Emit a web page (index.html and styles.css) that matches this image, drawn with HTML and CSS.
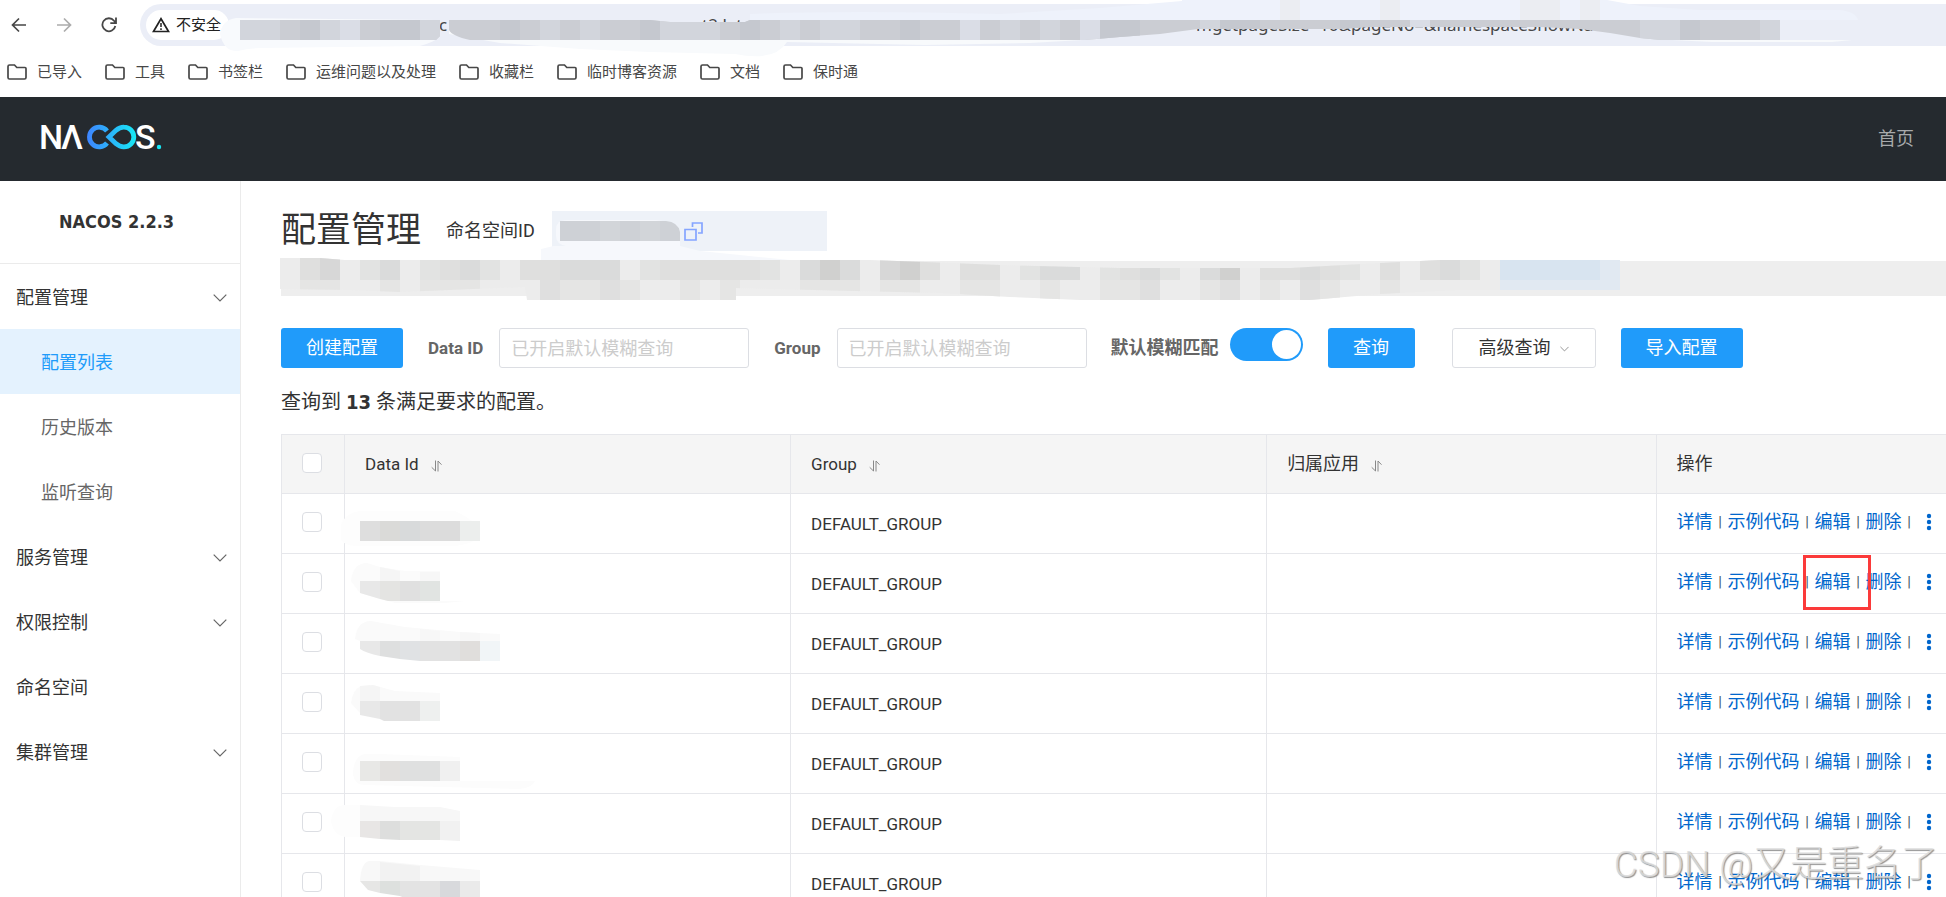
FILE: index.html
```html
<!DOCTYPE html>
<html lang="zh-CN">
<head>
<meta charset="utf-8">
<title>NACOS - 配置管理</title>
<link rel="stylesheet" href="styles.css">
</head>
<body>
<svg class="defs" aria-hidden="true">
  <symbol id="folder" viewBox="0 0 20 16"><path d="M2.5 1h5l2.3 2.5h8.2a1 1 0 0 1 1 1V13.500a1.500 1.500 0 0 1-1.500 1.500h-15A1.500 1.500 0 0 1 1 13.500v-11A1.500 1.500 0 0 1 2.500 1z" fill="none" stroke="#474747" stroke-width="1.700"/></symbol>
  <symbol id="chevron" viewBox="0 0 14 8"><path d="M.7.7 7 7 13.300.7" fill="none" stroke="currentColor" stroke-width="1.200"/></symbol>
  <symbol id="sort" viewBox="0 0 11 12"><path d="M4.500.5v10.500L.7 7.300M7 11.500V1l3.500 3.700" fill="none" stroke="#888" stroke-width="1"/></symbol>
  <symbol id="dots" viewBox="0 0 6 18"><circle cx="3" cy="3" r="2.200"/><circle cx="3" cy="9" r="2.200"/><circle cx="3" cy="15" r="2.200"/></symbol>
</svg>
<div class="window">
  <div class="browser">
    <div class="toolbar">
      <button class="tool" aria-label="后退"><svg width="16" height="16" viewBox="0 0 16 16"><path d="M15 8H2M8 1.500 1.500 8 8 14.500" fill="none" stroke="#474747" stroke-width="1.700"/></svg></button>
      <button class="tool faded" aria-label="前进"><svg width="16" height="16" viewBox="0 0 16 16"><path d="M1 8h13M8 1.500 14.500 8 8 14.500" fill="none" stroke="#474747" stroke-width="1.700"/></svg></button>
      <button class="tool" aria-label="重新加载"><svg width="16" height="16" viewBox="0 0 16 16"><path d="M14.300 9A6.500 6.500 0 1 1 13 3.700L14.500 5.500M15 .5v5.700H9.300" fill="none" stroke="#474747" stroke-width="1.800"/></svg></button>
      <div class="address">
        <button class="chip"><svg width="18" height="16" viewBox="0 0 18 16"><path d="M9 1.700 16.500 14.500h-15z" fill="none" stroke="#222" stroke-width="1.700"/><path d="M9 6v4M9 11.300v1.700" stroke="#222" stroke-width="1.500"/></svg>不安全</button>
        <div class="url"><span class="part-a">c</span><span class="part-b">t2.lat</span><span class="part-c">mgetpageSize=10&amp;pageNo=&amp;namespaceShowNa</span></div>
      </div>
      <svg class="cover" width="1946" height="60" viewBox="0 0 1946 60" aria-hidden="true">
        <path d="M236 18Q222 20 220 34Q224 52 238 51Q248 48 262 48L420 46Q434 42 438 38L438 20z" fill="#f8fafd"/>
        <path d="M449 20V34L500 43L580 49L650 52L735 54Q775 62 787 42L925 45L1030 43L1100 39V22H670L650 20z" fill="#f8fafc"/>
        <path d="M750 20V14Q850 10 1000 14L1100 8L1182 1V0H1607L1640 6L1700 10L1840 10Q1856 12 1858 20z" fill="#eef2fb"/>
        <path d="M1280 0h20v20h-20zM1380 0h20v20h-20zM1520 0h40v20h-40zM1580 0h20v20h-20z" fill="#ebedf2"/>
        <path d="M1672 40h180l-20 2h-120z" fill="#f8fafc"/>
        <clipPath id="urlclip"><path d="M240 20H440L440 36L436 40H240zM449 20H650L670 22H745L750 20H1780V40H1661L1640 38L1610 33L1580 29L1540 27H1410L1370 27L1340 29H1198L1160 34L1120 37L1085 40H470Q452 36 449 30z"/></clipPath>
        <g clip-path="url(#urlclip)">
          <path d="M240 20H1780V40H240z" fill="#cbcdd3"/>
          <path d="M240 20h40v20h-40zM320 20h20v20h-20zM420 20h20v20h-20zM540 20h20v20h-20zM580 20h20v20h-20zM660 20h60v20h-60zM780 20h20v20h-20zM820 20h40v20h-40zM1000 20h20v20h-20zM1040 20h20v20h-20zM1200 20h20v20h-20zM1640 20h40v20h-40zM1760 20h20v20h-20z" fill="#d2d5dc"/>
          <path d="M340 20h20v20h-20zM960 20h20v20h-20zM1080 20h20v20h-20zM1410 20h20v20h-20z" fill="#dadde6"/>
          <path d="M300 20h20v20h-20zM380 20h40v20h-40zM500 20h20v20h-20zM640 20h20v20h-20zM740 20h20v20h-20zM900 20h20v20h-20zM1100 20h40v20h-40zM1220 20h40v20h-40zM1340 20h20v20h-20zM1680 20h20v20h-20z" fill="#c5c8cf"/>
        </g>
      </svg>
    </div>
    <nav class="bookmarks" aria-label="书签">
      <a href="#"><svg><use href="#folder"/></svg>已导入</a>
      <a href="#"><svg><use href="#folder"/></svg>工具</a>
      <a href="#"><svg><use href="#folder"/></svg>书签栏</a>
      <a href="#"><svg><use href="#folder"/></svg>运维问题以及处理</a>
      <a href="#"><svg><use href="#folder"/></svg>收藏栏</a>
      <a href="#"><svg><use href="#folder"/></svg>临时博客资源</a>
      <a href="#"><svg><use href="#folder"/></svg>文档</a>
      <a href="#"><svg><use href="#folder"/></svg>保时通</a>
    </nav>
  </div>

  <header class="topbar">
    <a class="logo" href="#" aria-label="NACOS">
      <svg width="122" height="26" viewBox="0 0 122 26">
        <defs><linearGradient id="loop" gradientUnits="userSpaceOnUse" x1="45" y1="0" x2="96" y2="0"><stop offset="0" stop-color="#4080ff"/><stop offset="1" stop-color="#16e8f5"/></linearGradient></defs>
        <text class="logo-text" y="25"><tspan x="-1">N</tspan><tspan x="21">Λ</tspan><tspan x="95">S</tspan></text>
        <path d="M67 19A9.800 9.800 0 1 1 67 7" fill="none" stroke="url(#loop)" stroke-width="4.800"/>
        <path d="M69 13L76 6.300Q80 3 84 3.200A9.800 9.800 0 0 1 84 22.800Q80 23 76 19.700z" fill="none" stroke="url(#loop)" stroke-width="4.800"/>
        <circle cx="119" cy="23" r="2.200" fill="#16e8f5"/>
      </svg>
    </a>
    <a class="home" href="#">首页</a>
  </header>

  <div class="layout">
    <aside class="sidebar">
      <div class="version">NACOS 2.2.3</div>
      <nav class="menu">
        <a href="#">配置管理<svg><use href="#chevron"/></svg></a>
        <a class="sub active" href="#">配置列表</a>
        <a class="sub" href="#">历史版本</a>
        <a class="sub" href="#">监听查询</a>
        <a href="#">服务管理<svg><use href="#chevron"/></svg></a>
        <a href="#">权限控制<svg><use href="#chevron"/></svg></a>
        <a href="#">命名空间</a>
        <a href="#">集群管理<svg><use href="#chevron"/></svg></a>
      </nav>
    </aside>

    <main class="main">
      <div class="heading">
        <h1>配置管理</h1>
        <span class="ns-label">命名空间ID</span>
        <div class="ns-box">
          <svg width="124" height="30" viewBox="0 0 124 30" aria-hidden="true"><path d="M0 14Q0 4 10 4H100Q122 6 124 18V30H10Q0 28 0 20z" fill="#f6f8fc"/><path d="M4 5H110Q122 6 124 16V25H4z" fill="#ced1d6"/><path d="M44 5h20v20h-20zM84 5h20v20h-20z" fill="#d2d5d9"/></svg>
          <button class="copy" aria-label="复制"><svg width="19" height="19" viewBox="0 0 19 19"><path d="M8.500 5V1h9.500v10h-4M1 7.500h11v10.500H1z" fill="none" stroke="#85a5ff" stroke-width="1.700"/></svg></button>
        </div>
      </div>

      <div class="banner">
        <svg width="1400" height="60" viewBox="270 246 1400 60" aria-hidden="true">
          <path d="M541 249L562 244H672L700 251L790 260H541z" fill="#f6f8fc"/>
          <clipPath id="bannerclip"><path d="M280 258H320L345 260H870L925 262L1000 265L1120 268H1290L1380 263L1440 260H1620V290H1460L1380 294L1310 300H1080L1010 297L940 293L736 288V300H527L525 287L400 292L350 290L280 289z"/></clipPath>
          <g clip-path="url(#bannerclip)">
            <path d="M280 256H1620V300H280z" fill="#ececec"/>
            <path d="M360 260h20v20h-20zM420 260h20v20h-20zM640 260h20v20h-20zM760 260h20v20h-20zM1020 260h20v20h-20zM1100 260h20v20h-20zM1160 260h20v20h-20zM1340 260h20v20h-20zM1460 260h20v20h-20zM480 260h20v20h-20z" fill="#e2e3e2"/>
            <path d="M300 258h20v22h-20zM440 260h20v20h-20zM520 260h40v20h-40zM660 260h100v20h-100zM920 260h20v20h-20zM960 260h40v20h-40zM1120 260h20v20h-20zM1260 260h40v20h-40zM1320 260h20v20h-20zM1380 260h20v20h-20zM1420 260h20v20h-20z" fill="#dfdfde"/>
            <path d="M380 260h20v20h-20zM460 260h20v20h-20zM560 260h60v20h-60zM800 260h20v20h-20zM840 260h20v20h-20zM1040 260h40v20h-40zM1140 260h20v20h-20zM1200 260h20v20h-20zM1300 260h20v20h-20zM1440 260h20v20h-20z" fill="#dadbdb"/>
            <path d="M320 258h20v22h-20zM880 260h20v20h-20z" fill="#d7d7d7"/>
            <path d="M820 260h20v20h-20zM900 260h20v20h-20zM1220 260h20v20h-20z" fill="#d0d0cf"/>
            <path d="M300 280h40v20h-40zM380 280h20v20h-20zM420 280h60v20h-60zM560 280h40v20h-40zM620 280h20v20h-20zM680 280h20v20h-20zM720 280h20v20h-20zM800 280h60v20h-60zM880 280h40v20h-40zM960 280h40v20h-40zM1040 280h20v20h-20zM1100 280h40v20h-40zM1200 280h20v20h-20zM1260 280h20v20h-20zM1320 280h20v20h-20zM1380 280h20v20h-20z" fill="#e5e5e4"/>
            <path d="M540 280h20v20h-20zM600 280h20v20h-20zM1140 280h20v20h-20zM1220 280h20v20h-20zM1300 280h20v20h-20z" fill="#dfdfdf"/>
            <path d="M1500 260h120v20h-120z" fill="#d8e4f0"/><path d="M1500 280h120v10h-120zM1600 260h20v20h-20z" fill="#e1e9f2"/>
          </g>
        </svg>
      </div>

      <form class="filters" onsubmit="return false">
        <button class="btn primary" type="button">创建配置</button>
        <label class="field id-field"><span>Data ID</span><input type="text" placeholder="已开启默认模糊查询"></label>
        <label class="field group-field"><span>Group</span><input type="text" placeholder="已开启默认模糊查询"></label>
        <label class="field fuzzy"><span>默认模糊匹配</span><input class="switch" type="checkbox" role="switch" checked></label>
        <button class="btn primary search" type="submit">查询</button>
        <button class="btn more" type="button">高级查询<svg><use href="#chevron"/></svg></button>
        <button class="btn primary" type="button">导入配置</button>
      </form>

      <p class="summary">查询到 <strong>13</strong> 条满足要求的配置。</p>

      <table class="grid">
        <colgroup><col class="c-check"><col class="c-id"><col class="c-group"><col class="c-app"><col></colgroup>
        <thead>
          <tr>
            <th class="check"><input type="checkbox" aria-label="全选"></th>
            <th>Data Id<svg><use href="#sort"/></svg></th>
            <th>Group<svg><use href="#sort"/></svg></th>
            <th class="cjk">归属应用<svg><use href="#sort"/></svg></th>
            <th class="cjk">操作</th>
          </tr>
        </thead>
        <tbody>
          <tr>
            <td class="check"><input type="checkbox" aria-label="选择第1行"></td>
            <td class="masked"><svg viewBox="0 0 420 58" aria-hidden="true"><path d="M-4 30Q0 18 15 16H110Q140 30 132 44Q120 52 100 51H10Q-2 50 -4 44z" fill="#fdfdfd"/><path d="M15 26h20v20h-20z" fill="#dedede"/><path d="M35 26h20v20h-20z" fill="#dadad8"/><path d="M55 26h20v20h-20z" fill="#d8dadb"/><path d="M75 26h40v20h-40z" fill="#dcdcdc"/><path d="M115 26h20v20h-20z" fill="#eceeed"/></svg></td>
            <td>DEFAULT_GROUP</td><td></td>
            <td class="actions"><div><a href="#">详情</a><i>|</i><a href="#">示例代码</a><i>|</i><a href="#">编辑</a><i>|</i><a href="#">删除</a><i>|</i><button aria-label="更多"><svg><use href="#dots"/></svg></button></div></td>
          </tr>
          <tr>
            <td class="check"><input type="checkbox" aria-label="选择第2行"></td>
            <td class="masked"><svg viewBox="0 0 420 58" aria-hidden="true"><path d="M6 26Q8 8 22 8L35 12L60 16H95V26L80 46H120L100 48H50L15 38z" fill="#fbfbfb"/><path d="M35 12L55 16V26H35z" fill="#f5f5f5"/><path d="M75 17h20v9h-20z" fill="#f7f7f7"/><path d="M15 26h20v18l-20-6z" fill="#e8e8e8"/><path d="M35 26h20v20h-12l-8-2z" fill="#e4e4e2"/><path d="M55 26h20v20h-20z" fill="#e0e0e0"/><path d="M75 26h20v20h-20z" fill="#e1e4e2"/></svg></td>
            <td>DEFAULT_GROUP</td><td></td>
            <td class="actions"><div><a href="#">详情</a><i>|</i><a href="#">示例代码</a><i>|</i><a class="marked" href="#">编辑</a><i>|</i><a href="#">删除</a><i>|</i><button aria-label="更多"><svg><use href="#dots"/></svg></button></div></td>
          </tr>
          <tr>
            <td class="check"><input type="checkbox" aria-label="选择第3行"></td>
            <td class="masked"><svg viewBox="0 0 420 58" aria-hidden="true"><path d="M10 24Q12 6 26 6L60 12L115 17L155 19V26H15z" fill="#fafafa"/><path d="M75 14l20 2v10h-20zM115 17l20 1v8h-20z" fill="#f7f7f7"/><path d="M15 26h20v15q-14-3-20-7z" fill="#e8e8e8"/><path d="M35 26h20v18l-20-3z" fill="#dedfdf"/><path d="M55 26h20v20l-20-2z" fill="#e0e2e4"/><path d="M75 26h40v20h-40z" fill="#e2e2e2"/><path d="M115 26h20v20h-20z" fill="#e0dedc"/><path d="M135 26h20v20h-20z" fill="#f1f5f7"/></svg></td>
            <td>DEFAULT_GROUP</td><td></td>
            <td class="actions"><div><a href="#">详情</a><i>|</i><a href="#">示例代码</a><i>|</i><a href="#">编辑</a><i>|</i><a href="#">删除</a><i>|</i><button aria-label="更多"><svg><use href="#dots"/></svg></button></div></td>
          </tr>
          <tr>
            <td class="check"><input type="checkbox" aria-label="选择第4行"></td>
            <td class="masked"><svg viewBox="0 0 420 58" aria-hidden="true"><path d="M6 28Q8 14 16 11L28 10L50 16L95 18V26H15V38z" fill="#fafafa"/><path d="M15 11L28 10L35 12V26H15z" fill="#f5f5f5"/><path d="M15 26h20v18l-20-4z" fill="#e8e8e8"/><path d="M35 26h40v20h-36l-4-2z" fill="#e2e2e2"/><path d="M75 26h20v20h-20z" fill="#eef0ef"/></svg></td>
            <td>DEFAULT_GROUP</td><td></td>
            <td class="actions"><div><a href="#">详情</a><i>|</i><a href="#">示例代码</a><i>|</i><a href="#">编辑</a><i>|</i><a href="#">删除</a><i>|</i><button aria-label="更多"><svg><use href="#dots"/></svg></button></div></td>
          </tr>
          <tr>
            <td class="check"><input type="checkbox" aria-label="选择第5行"></td>
            <td class="masked"><svg viewBox="0 0 420 58" aria-hidden="true"><path d="M8 36Q10 20 20 19H35L115 22V46H190Q186 54 170 54L20 50Q10 50 8 40z" fill="#fcfcfc"/><path d="M15 26h20v20h-20z" fill="#e8e8e6"/><path d="M35 26h20v20h-20z" fill="#e2e0de"/><path d="M55 26h40v20h-40z" fill="#dfe0e0"/><path d="M95 26h20v20h-20z" fill="#f0f0f0"/></svg></td>
            <td>DEFAULT_GROUP</td><td></td>
            <td class="actions"><div><a href="#">详情</a><i>|</i><a href="#">示例代码</a><i>|</i><a href="#">编辑</a><i>|</i><a href="#">删除</a><i>|</i><button aria-label="更多"><svg><use href="#dots"/></svg></button></div></td>
          </tr>
          <tr>
            <td class="check"><input type="checkbox" aria-label="选择第6行"></td>
            <td class="masked"><svg viewBox="0 0 420 58" aria-hidden="true"><path d="M-14 26Q-12 10 0 10H15V42L0 42Q-12 40 -14 26z" fill="#fdfdfd"/><path d="M15 10L50 12H95L115 16V26H15z" fill="#f7f7f7"/><path d="M15 26h20v18l-20-2z" fill="#e8e6e5"/><path d="M35 26h20v19l-20-1z" fill="#dddedd"/><path d="M55 26h40v19h-40z" fill="#e4e5e3"/><path d="M95 26h20v20l-20-1z" fill="#f1f1f1"/></svg></td>
            <td>DEFAULT_GROUP</td><td></td>
            <td class="actions"><div><a href="#">详情</a><i>|</i><a href="#">示例代码</a><i>|</i><a href="#">编辑</a><i>|</i><a href="#">删除</a><i>|</i><button aria-label="更多"><svg><use href="#dots"/></svg></button></div></td>
          </tr>
          <tr>
            <td class="check"><input type="checkbox" aria-label="选择第7行"></td>
            <td class="masked"><svg viewBox="0 0 420 58" aria-hidden="true"><path d="M15 26Q16 8 24 6H35L75 10L135 15V26z" fill="#f8f8f8"/><path d="M35 7l40 4v15h-40z" fill="#f2f2f2"/><path d="M15 26h20v12l-12-3z" fill="#e6e6e5"/><path d="M35 26h20v15l-20-3z" fill="#dde0de"/><path d="M55 26h40v20h-28l-12-5z" fill="#e3e3e3"/><path d="M95 26h20v20h-20z" fill="#d8d9dc"/><path d="M115 26h20v20h-20z" fill="#eaeaea"/></svg></td>
            <td>DEFAULT_GROUP</td><td></td>
            <td class="actions"><div><a href="#">详情</a><i>|</i><a href="#">示例代码</a><i>|</i><a href="#">编辑</a><i>|</i><a href="#">删除</a><i>|</i><button aria-label="更多"><svg><use href="#dots"/></svg></button></div></td>
          </tr>
        </tbody>
      </table>
    </main>
  </div>
  <div class="watermark">CSDN @又是重名了</div>
</div>
</body>
</html>
```
FILE: styles.css
```css
* { box-sizing: border-box; }
body {
  margin: 0;
  color: #333;
  background: #fff;
  font: 18px/24px Roboto, "Noto Sans CJK SC", sans-serif;
}
a { color: inherit; text-decoration: none; }
button { border: 0; padding: 0; background: none; color: inherit; font: inherit; }
.defs { display: none; }
.window { position: relative; display: flex; flex-direction: column; height: 100vh; overflow: hidden; }

.browser { flex: none; font-size: 15px; line-height: 20px; color: #474747; }
.toolbar { position: relative; display: flex; align-items: center; gap: 29px; padding: 4px 0 0 11px; }
.tool { display: flex; }
.tool.faded { opacity: .45; }
.address {
  flex: 1; display: flex; align-items: center; height: 42px; min-width: 0;
  margin-left: -6px; padding-left: 6px; overflow: hidden;
  border-radius: 21px 0 0 21px; background: #ebeef7;
}
.chip {
  flex: none; display: flex; align-items: center; gap: 6px; height: 30px;
  padding: 0 8px 0 6px; border-radius: 15px; background: #fff; color: #222;
}
.url { display: flex; font: 17px/20px "Noto Sans", sans-serif; white-space: nowrap; }
.part-a { width: 263px; margin-left: 210px; }
.part-b { width: 494px; }
.cover { position: absolute; left: 0; top: 0; }
.bookmarks { display: flex; gap: 23px; height: 51px; padding: 0 7px; align-items: center; }
.bookmarks a { display: flex; align-items: center; gap: 10px; }
.bookmarks svg { width: 20px; height: 16px; }

.topbar {
  flex: none; display: flex; align-items: center; justify-content: space-between;
  height: 84px; padding: 0 32px 0 40px; background: #252a2f;
}
.logo { display: flex; margin-bottom: 4px; }
.logo svg { overflow: visible; }
.logo-text { font: 500 34px Roboto, sans-serif; fill: #fff; }
.home { color: #a8aaac; }

.layout { flex: 1; display: flex; min-height: 0; }
.sidebar { flex: none; width: 241px; border-right: 1px solid #ebebeb; }
.version {
  padding: 29px 59px; border-bottom: 1px solid #ebebeb;
  font-family: "DejaVu Sans Condensed", "DejaVu Sans", sans-serif; font-weight: 700; white-space: nowrap;
}
.menu a { display: flex; align-items: center; justify-content: space-between; height: 65px; padding: 3px 13px 0 16px; }
.menu svg { width: 14px; height: 8px; color: #666; }
.menu .sub { padding-left: 41px; color: #666; }
.menu .active { background: #e4f2fe; color: #209bfa; }

.main { flex: 1; min-width: 0; padding: 30px 0 0 40px; }
.heading { display: flex; align-items: center; height: 40px; }
h1 { margin: 0 25px 0 0; font-size: 35px; line-height: 40px; font-weight: 400; }
.ns-label { margin-right: 17px; }
.ns-box { display: flex; align-items: center; width: 275px; height: 40px; padding-left: 4px; background: #eef2f8; }
.copy { display: flex; margin-left: 4px; }
.banner { position: relative; height: 35px; margin: 10px 0 32px; background: #eee; }
.banner svg { position: absolute; left: -11px; top: -15px; }

.filters { display: flex; align-items: flex-start; }
.btn { height: 40px; min-width: 122px; border-radius: 3px; }
.primary { background: #209bfa; color: #fff; }
.field { display: flex; align-items: center; color: #666; }
.field span { font-weight: 700; font-size: 17px; }
.field input[type="text"] {
  width: 250px; height: 40px; padding: 0 11px; border: 1px solid #dcdee3; border-radius: 3px; font: inherit; color: #333;
}
.field input::placeholder { color: #ccc; opacity: 1; }
.id-field, .group-field { margin-left: 25px; gap: 16px; }
.fuzzy { align-items: flex-start; margin-left: 24px; gap: 11px; }
.fuzzy span { font-size: 18px; line-height: 40px; }
.switch {
  appearance: none; width: 73px; height: 33px; margin: 0; padding: 2px; border-radius: 17px; background: #209bfa;
}
.switch::before { content: ""; display: block; width: 29px; height: 29px; margin-left: auto; border-radius: 50%; background: #fff; }
.search { min-width: 87px; margin-left: 25px; }
.more { min-width: 144px; margin: 0 25px 0 37px; border: 1px solid #dcdee3; background: #fff; }
.more svg { width: 9px; height: 6px; margin-left: 9px; vertical-align: middle; color: #777; }

.summary { margin: 20px 0 18px; font-size: 20px; line-height: 28px; }
.summary strong { font-family: "DejaVu Sans Condensed", "DejaVu Sans", sans-serif; }

.grid { width: 100%; table-layout: fixed; border-collapse: collapse; }
.c-check { width: 63px; }
.c-id { width: 26.8%; }
.c-group { width: 28.6%; }
.c-app { width: 23.4%; }
th, td { height: 60px; padding: 0 20px; border: 1px solid #e6e7eb; border-right: 0; text-align: left; font-size: 17px; font-weight: 400; }
th { height: 59px; background: #f5f5f5; white-space: nowrap; }
th svg { width: 11px; height: 12px; margin-left: 12px; vertical-align: -2px; }
th.cjk, .actions { font-size: 18px; }
.check { padding: 0 0 3px 20px; }
.check input {
  appearance: none; display: block; width: 20px; height: 20px; margin: 0;
  border: 1px solid #dcdee3; border-radius: 4px; background: #fff;
}
td.masked { padding: 0; }
.masked svg { display: block; width: 420px; height: 58px; overflow: visible; }
.actions { color: #06c; white-space: nowrap; padding: 0 0 3px 20px; }
.actions div { display: flex; align-items: center; }
.actions i { width: 15px; text-align: center; font-style: normal; font-size: 15px; color: #456; }
.actions button { display: flex; margin-left: 9px; }
.actions button svg { width: 6px; height: 18px; fill: #06c; }
.marked { position: relative; }
.marked::after { content: ""; position: absolute; inset: -15px -20px -16px -12px; border: 3px solid #fb3a3a; }

.watermark {
  position: absolute; right: 8px; bottom: 12px; font-size: 37px; line-height: 40px; font-weight: 300;
  color: rgba(220, 220, 220, .85); text-shadow: 1px 1px 1px rgba(110, 110, 110, .75); white-space: nowrap; pointer-events: none;
}
```
